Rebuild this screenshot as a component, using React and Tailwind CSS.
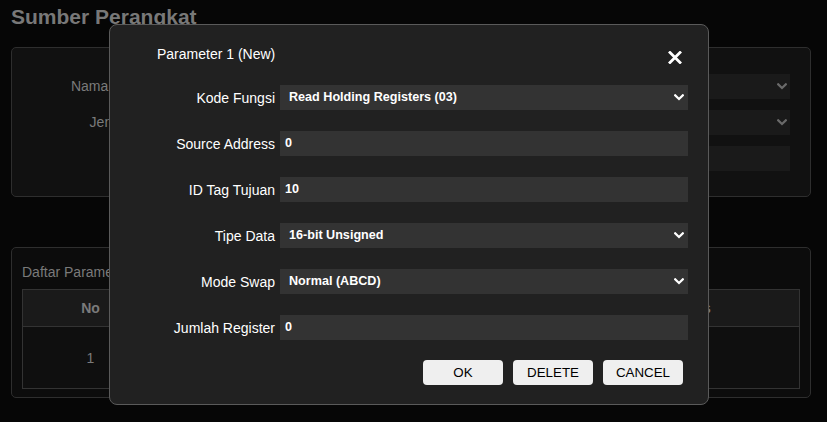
import React from "react";

const Chevron = ({ color = "#ffffff" }) => (
  <svg width="10" height="7" viewBox="0 0 10 7" className="shrink-0">
    <polyline points="1.2,1.3 5,5 8.8,1.3" fill="none" stroke={color} strokeWidth="2.2" strokeLinecap="square" />
  </svg>
);

const FieldRow = ({ label, value, select }) => (
  <div className="flex items-center h-[25px]">
    <div className="w-[165px] text-right text-[14px] leading-[16px] text-white">{label}</div>
    <div
      className={`ml-[5px] w-[408px] h-[25px] bg-[#333333] flex items-center justify-between text-white font-bold text-[12.6px] ${
        select ? "pl-[9px] pr-[4px]" : "pl-[5px]"
      }`}
    >
      <span>{value}</span>
      {select && <Chevron />}
    </div>
  </div>
);

const BgRow = ({ label, select }) => (
  <div className="flex items-center h-[25px]">
    <div className="w-[164px] text-right text-[14px] text-[#7a7a7a] whitespace-nowrap">{label}</div>
    <div className="ml-[10px] flex-1 h-[25px] bg-[#1a1a1a] flex items-center justify-end pr-[3px]">
      {select && <Chevron color="#6a6a6a" />}
    </div>
  </div>
);

export default function App() {
  return (
    <div
      className="relative w-[827px] h-[422px] overflow-hidden bg-[#060606]"
      style={{ fontFamily: '"Liberation Sans", Arial, sans-serif' }}
    >
      {/* background page */}
      <div className="pl-[11px]">
        <h1 className="pt-[5px] text-[21px] leading-[24px] font-bold text-[#787878]">Sumber Perangkat</h1>
        <div className="mt-[18px] w-[800px] h-[150px] border border-[#2e2e2e] rounded-[5px] bg-[#111111] pt-[26px] pr-[20px] flex flex-col gap-[11px]">
          <BgRow label="Nama Perangkat" select />
          <BgRow label="Jenis Koneksi" select />
          <BgRow label="" />
        </div>
        <div className="mt-[50px] w-[800px] h-[151px] border border-[#2e2e2e] rounded-[5px] bg-[#0c0c0c] px-[10px]">
          <div className="pt-[16px] text-[14px] leading-[16px] text-[#7a7a7a]">Daftar Parameter</div>
          <div className="mt-[9px] border border-[#333333] w-[778px]">
            <div className="grid grid-cols-[135px_1fr_220px] h-[37px] bg-[#1a1a1a] border-b border-[#333333] items-center text-[14px] font-bold text-[#7a7a7a]">
              <div className="text-center">No</div>
              <div className="text-center">Nama</div>
              <div className="text-center pl-[1px]">Status</div>
            </div>
            <div className="grid grid-cols-[135px_1fr_220px] h-[61px] bg-[#0f0f0f] items-center text-[14px] text-[#7a7a7a]">
              <div className="text-center pt-[2px]">1</div>
              <div></div>
              <div></div>
            </div>
          </div>
        </div>
      </div>

      {/* modal */}
      <div className="absolute left-[109px] top-[24px] w-[600px] h-[381px] bg-[#212121] border border-[#5a5a5a] rounded-[8px]">
        <div className="mt-[21px] ml-[47px] mr-[26px] flex items-center justify-between h-[16px]">
          <span className="text-[14px] leading-[16px] text-white">Parameter 1 (New)</span>
          <svg width="14" height="13" viewBox="0 0 14 13" className="mt-[6px]">
            <line x1="2" y1="1.5" x2="12" y2="11.5" stroke="#ffffff" strokeWidth="2.8" strokeLinecap="square" />
            <line x1="12" y1="1.5" x2="2" y2="11.5" stroke="#ffffff" strokeWidth="2.8" strokeLinecap="square" />
          </svg>
        </div>
        <div className="mt-[23px] flex flex-col gap-[21px]">
          <FieldRow label="Kode Fungsi" value="Read Holding Registers (03)" select />
          <FieldRow label="Source Address" value="0" />
          <FieldRow label="ID Tag Tujuan" value="10" />
          <FieldRow label="Tipe Data" value="16-bit Unsigned" select />
          <FieldRow label="Mode Swap" value="Normal (ABCD)" select />
          <FieldRow label="Jumlah Register" value="0" />
        </div>
        <div className="mt-[20px] mr-[25px] flex justify-end gap-[10px]">
          {["OK", "DELETE", "CANCEL"].map((b) => (
            <button
              key={b}
              className="w-[80px] h-[25px] bg-[#efefef] rounded-[4px] text-[13.33px] text-black flex items-center justify-center"
            >
              {b}
            </button>
          ))}
        </div>
      </div>
    </div>
  );
}
